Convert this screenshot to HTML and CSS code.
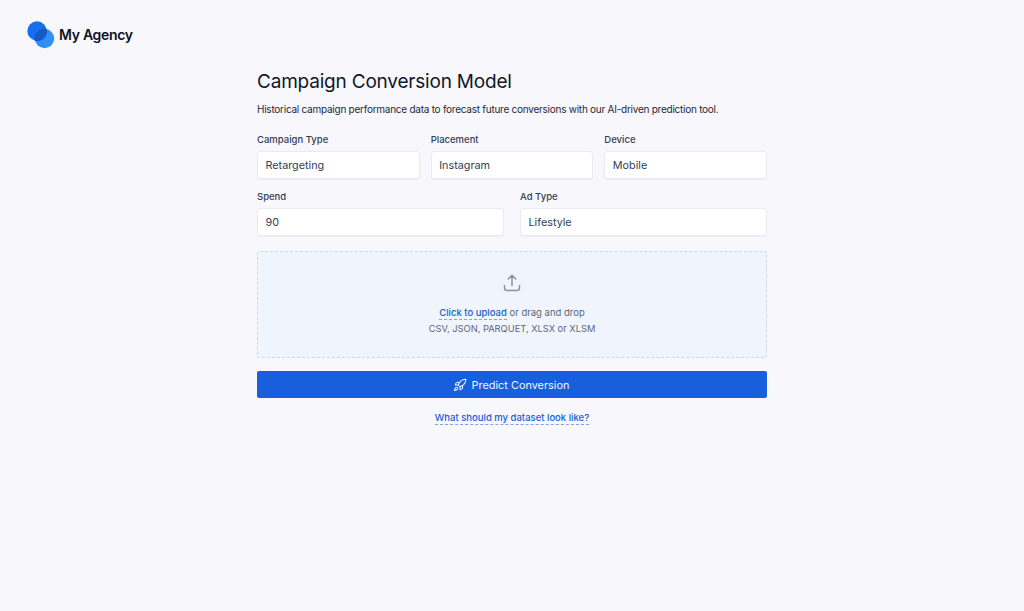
FILE: index.html
```html
<!DOCTYPE html>
<html lang="en">
<head>
<meta charset="utf-8">
<title>Campaign Conversion Model</title>
<link rel="stylesheet" href="styles.css">
</head>
<body>
<header class="brand">
  <svg class="logo" width="28" height="28" viewBox="0 0 28 28" aria-hidden="true">
    <circle cx="17.5" cy="17.5" r="9.7" fill="#2f8ffb"/>
    <circle cx="10" cy="10" r="9.7" fill="#1570ef"/>
    <path d="M17.5 7.8a9.7 9.7 0 0 0-9.7 11.9A9.7 9.7 0 0 0 19.7 7.9a9.7 9.7 0 0 0-2.2-.1z" fill="#1559c4"/>
  </svg>
  <span class="brand-name">My Agency</span>
</header>
<main class="content">
  <h1 class="title">Campaign Conversion Model</h1>
  <p class="intro">Historical campaign performance data to forecast future conversions with our AI-driven prediction tool.</p>
  <div class="row row-three">
    <label class="field"><span class="label">Campaign Type</span><span class="input">Retargeting</span></label>
    <label class="field"><span class="label">Placement</span><span class="input">Instagram</span></label>
    <label class="field"><span class="label">Device</span><span class="input">Mobile</span></label>
  </div>
  <div class="row row-two">
    <label class="field"><span class="label">Spend</span><span class="input">90</span></label>
    <label class="field"><span class="label">Ad Type</span><span class="input">Lifestyle</span></label>
  </div>
  <section class="dropzone">
    <svg class="upload-icon" width="20" height="20" viewBox="0 0 20 20" fill="none" stroke="#8b93a1" stroke-width="1.5" stroke-linecap="round" stroke-linejoin="round" aria-hidden="true">
      <path d="M2.5 12.5v2.2a2.8 2.8 0 0 0 2.8 2.8h9.4a2.8 2.8 0 0 0 2.8-2.8v-2.2"/>
      <path d="M10 12.5V2.5M6.2 6 10 2.3 13.8 6"/>
    </svg>
    <p class="drop-line"><a class="link">Click to upload</a> or drag and drop</p>
    <p class="drop-line drop-formats">CSV, JSON, PARQUET, XLSX or XLSM</p>
  </section>
  <button class="submit" type="button">
    <svg width="14" height="14" viewBox="0 0 24 24" fill="none" stroke="#f0f5ff" stroke-width="1.8" stroke-linecap="round" stroke-linejoin="round" aria-hidden="true">
      <path d="M4.5 16.5c-1.5 1.26-2 5-2 5s3.74-.5 5-2c.71-.84.7-2.13-.09-2.91a2.18 2.18 0 0 0-2.91-.09z"/>
      <path d="m12 15-3-3a22 22 0 0 1 2-3.95A12.88 12.88 0 0 1 22 2c0 2.72-.78 7.5-6 11a22.35 22.35 0 0 1-4 2z"/>
      <path d="M9 12H4s.55-3.03 2-4c1.62-1.08 5 0 5 0"/>
      <path d="M12 15v5s3.03-.55 4-2c1.08-1.62 0-5 0-5"/>
    </svg>
    <span>Predict Conversion</span>
  </button>
  <p class="help"><a class="link">What should my dataset look like?</a></p>
</main>
</body>
</html>
```
FILE: styles.css
```css
* { box-sizing: border-box; }
html, body { margin: 0; height: 100%; }
body {
  background: #f7f7fc;
  font-family: Inter, "Liberation Sans", sans-serif;
  color: #101828;
}
.brand {
  display: flex;
  align-items: flex-start;
  gap: 4px;
  padding: 21px 0 0 27px;
  height: 70px;
}
.logo { display: block; }
.brand-name {
  font-size: 14px;
  font-weight: 600;
  letter-spacing: -0.3px;
  line-height: 28px;
  color: #0f1222;
}
.content {
  width: 510px;
  margin: 0 auto;
}
.title {
  margin: 0;
  font-size: 19px;
  font-weight: 400;
  letter-spacing: -0.2px;
  line-height: 24px;
  color: #101828;
}
.intro {
  margin: 7px 0 0;
  font-size: 10px;
  letter-spacing: -0.25px;
  line-height: 16px;
  color: #1d2939;
}
.row { display: flex; }
.row-three { gap: 11px; margin-top: 16px; }
.row-two { gap: 16px; margin-top: 11px; }
.field { flex: 1 1 0; display: flex; flex-direction: column; gap: 4px; }
.label {
  font-size: 9.5px;
  font-weight: 500;
  line-height: 14px;
  color: #344054;
}
.input {
  display: block;
  height: 28px;
  padding: 0 7.5px;
  background: #fff;
  border: 1px solid #e9eaf3;
  border-radius: 3px;
  box-shadow: 0 1px 1px rgba(16, 24, 40, 0.04);
  font-size: 10.8px;
  line-height: 28px;
  color: #344054;
}
.dropzone {
  margin-top: 15px;
  height: 107px;
  padding-top: 21px;
  background: #f0f5fd;
  border: 1px dashed #ccd8e8;
  border-radius: 3px;
  display: flex;
  flex-direction: column;
  align-items: center;
}
.upload-icon { display: block; margin-bottom: 12px; }
.drop-line {
  margin: 0;
  font-size: 9.5px;
  line-height: 16px;
  color: #5d6675;
}
.drop-formats { font-size: 9.3px; }
.link {
  color: #1a5fd0;
  font-weight: 500;
  padding-bottom: 1px;
  border-bottom: 1px dashed #7ea3e2;
}
.submit {
  display: flex;
  align-items: center;
  justify-content: center;
  gap: 5px;
  width: 100%;
  height: 27px;
  margin-top: 13px;
  padding: 0 2px 0 0;
  border: 0;
  border-radius: 2px;
  background: #175fdc;
  color: #f0f5ff;
  font-family: inherit;
  font-size: 10.9px;
  font-weight: 400;
}
.help {
  margin: 12px 0 0;
  text-align: center;
  font-size: 9.5px;
  line-height: 16px;
}
```
